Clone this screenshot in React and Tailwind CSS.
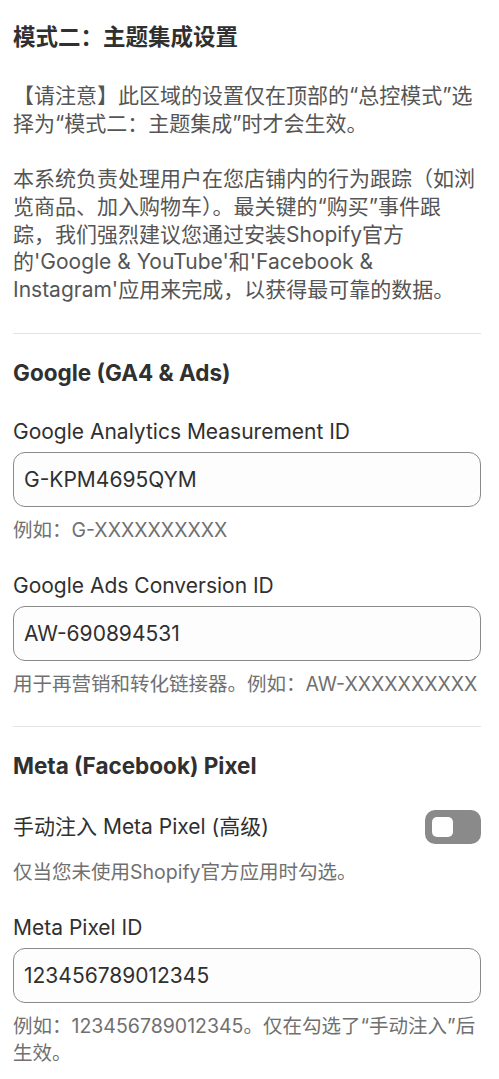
import React from "react";

const font = { fontFamily: '"Inter", "Noto Sans CJK SC", sans-serif' };

function Field({ label, value, hint, first }) {
  return (
    <div className={first ? "mt-[31px]" : "mt-[28px]"}>
      <label className="block text-[21px] leading-[28px] text-[#303030]">
        {label}
      </label>
      <input
        readOnly
        value={value}
        className="mt-[6px] block h-[55px] w-full rounded-[12px] border border-[#8a8a8a] bg-[#fdfdfd] px-[10px] text-[21px] text-[#303030] outline-none"
        style={font}
      />
      <p className="mt-[10px] text-[19.5px] leading-[27px] text-[#707070]">
        {hint}
      </p>
    </div>
  );
}

export default function App() {
  return (
    <div className="bg-white pl-[13px] pr-[18px] pt-[22px] pb-[20px]" style={font}>
      <h2 className="text-[22.5px] font-bold leading-[30px] text-[#303030]">
        模式二：主题集成设置
      </h2>
      <p className="mt-[30px] text-[21px] leading-[27.7px] text-[#555555]">
        【请注意】此区域的设置仅在顶部的“总控模式”选择为“模式二：主题集成”时才会生效。
        <br />
        <br />
        本系统负责处理用户在您店铺内的行为跟踪（如浏览商品、加入购物车）。最关键的“购买”事件跟踪，我们强烈建议您通过安装Shopify官方的'Google
        & YouTube'和'Facebook & Instagram'应用来完成，以获得最可靠的数据。
      </p>

      <hr className="mt-[29px] border-t border-[#e3e3e3]" />

      {/* Google */}
      <h3 className="mt-[25px] text-[22.5px] font-bold leading-[28px] text-[#303030]">
        Google (GA4 &amp; Ads)
      </h3>
      <Field
        first
        label="Google Analytics Measurement ID"
        value="G-KPM4695QYM"
        hint="例如：G-XXXXXXXXXX"
      />
      <Field
        label="Google Ads Conversion ID"
        value="AW-690894531"
        hint="用于再营销和转化链接器。例如：AW-XXXXXXXXXX"
      />

      <hr className="mt-[28px] border-t border-[#e3e3e3]" />

      {/* Meta */}
      <h3 className="mt-[25px] text-[22.5px] font-bold leading-[28px] text-[#303030]">
        Meta (Facebook) Pixel
      </h3>
      <div className="mt-[30px] flex items-center justify-between">
        <span className="text-[21px] leading-[28px] text-[#303030]">
          手动注入 Meta Pixel (高级)
        </span>
        <button className="flex h-[34px] w-[56px] items-center rounded-[10px] bg-[#8a8a8a] pl-[7px]">
          <span className="h-[20px] w-[21px] rounded-[5px] bg-white" />
        </button>
      </div>
      <p className="mt-[15px] text-[19.5px] leading-[27px] text-[#707070]">
        仅当您未使用Shopify官方应用时勾选。
      </p>
      <Field
        label="Meta Pixel ID"
        value="123456789012345"
        hint="例如：123456789012345。仅在勾选了“手动注入”后生效。"
      />
    </div>
  );
}
